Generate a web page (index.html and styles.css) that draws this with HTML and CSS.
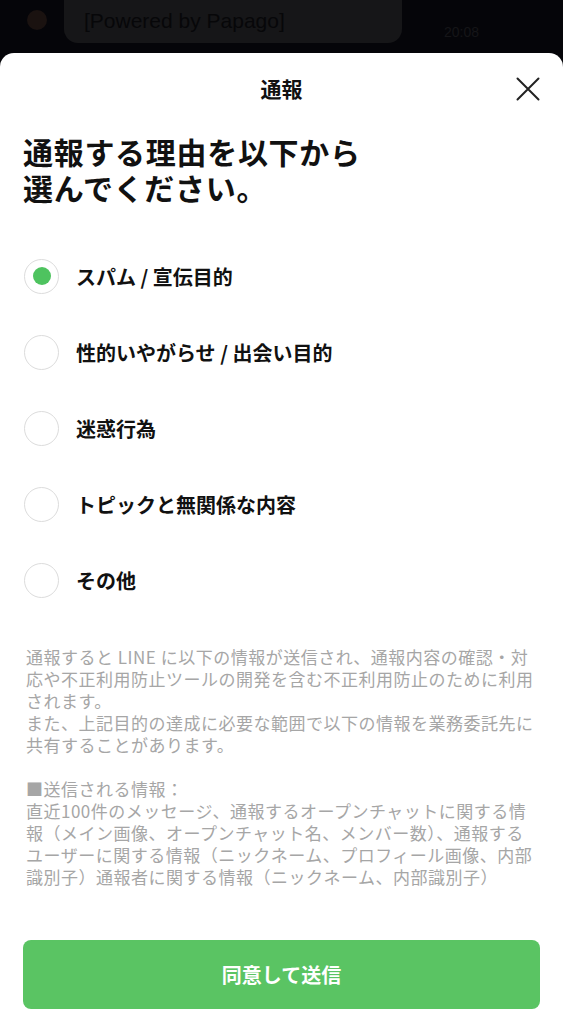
FILE: index.html
```html
<!DOCTYPE html>
<html lang="ja">
<head>
<meta charset="utf-8">
<link rel="stylesheet" href="styles.css">
</head>
<body>
<div class="backdrop">
  <div class="avatar"></div>
  <div class="bubble">[Powered by Papago]</div>
  <div class="time">20:08</div>
</div>
<div class="sheet">
  <header class="sheet-head">
    <h1 class="sheet-title">通報</h1>
    <button class="close" aria-label="閉じる">
      <svg width="24" height="24" viewBox="0 0 24 24"><path d="M1.5 1.5 L22.5 22.5 M22.5 1.5 L1.5 22.5" stroke="#222" stroke-width="2" fill="none" stroke-linecap="round"/></svg>
    </button>
  </header>
  <h2 class="question">通報する理由を以下から選んでください。</h2>
  <ul class="options">
    <li class="option selected"><span class="radio"></span><span class="label">スパム / 宣伝目的</span></li>
    <li class="option"><span class="radio"></span><span class="label">性的いやがらせ / 出会い目的</span></li>
    <li class="option"><span class="radio"></span><span class="label">迷惑行為</span></li>
    <li class="option"><span class="radio"></span><span class="label">トピックと無関係な内容</span></li>
    <li class="option"><span class="radio"></span><span class="label">その他</span></li>
  </ul>
  <p class="notice">通報すると LINE に以下の情報が送信され、通報内容の確認・対応や不正利用防止ツールの開発を含む不正利用防止のために利用されます。
また、上記目的の達成に必要な範囲で以下の情報を業務委託先に共有することがあります。

■送信される情報：
直近100件のメッセージ、通報するオープンチャットに関する情報（メイン画像、オープンチャット名、メンバー数）、通報するユーザーに関する情報（ニックネーム、プロフィール画像、内部識別子）通報者に関する情報（ニックネーム、内部識別子）</p>
  <button class="submit">同意して送信</button>
</div>
</body>
</html>
```
FILE: styles.css
```css
* { box-sizing: border-box; }
html, body { margin: 0; padding: 0; }
body {
  width: 563px;
  height: 1024px;
  overflow: hidden;
  background: #050509;
  font-family: "Noto Sans CJK JP", "Noto Sans", sans-serif;
  position: relative;
}
.backdrop {
  height: 53px;
  position: relative;
  overflow: hidden;
}
.avatar {
  position: absolute;
  left: 27px; top: 10px;
  width: 20px; height: 20px;
  border-radius: 50%;
  background: #1a1210;
}
.bubble {
  position: absolute;
  left: 64px; top: -20px;
  width: 338px; height: 63px;
  border-radius: 14px;
  background: #161618;
  color: #070709;
  font-family: "Liberation Sans", sans-serif;
  font-size: 21px;
  padding: 29px 0 0 20px;
}
.time {
  position: absolute;
  left: 444px; top: 24px;
  color: #151518;
  font-family: "Liberation Sans", sans-serif;
  font-size: 14px;
}
.sheet {
  background: #fff;
  border-radius: 14px 14px 0 0;
  height: 971px;
  padding: 0 23px;
  display: flex;
  flex-direction: column;
}
.sheet-head {
  height: 74px;
  display: flex;
  align-items: center;
  justify-content: center;
  position: relative;
}
.sheet-title {
  margin: 0 0 4px;
  font-size: 21px;
  font-weight: 700;
  color: #111;
}
.close {
  position: absolute;
  right: 0;
  top: 24px;
  width: 24px; height: 24px;
  padding: 0; border: 0; background: none;
}
.close svg { display: block; }
.question {
  margin: 6px 0 0 0;
  max-width: 350px;
  font-size: 30px;
  letter-spacing: 0.7px;
  line-height: 36px;
  font-weight: 700;
  color: #111;
}
.options {
  list-style: none;
  margin: 54px 0 0;
  padding: 0;
  display: flex;
  flex-direction: column;
  gap: 42px;
}
.option {
  display: flex;
  align-items: center;
  gap: 17px;
  height: 34px;
}
.radio {
  width: 35px; height: 35px;
  border-radius: 50%;
  border: 1px solid #dcdcdc;
  display: flex;
  align-items: center;
  justify-content: center;
  flex: none;
  margin-left: 1px;
}
.selected .radio::after {
  content: "";
  width: 18px; height: 18px;
  border-radius: 50%;
  background: #4ec35f;
}
.label {
  font-size: 20px;
  font-weight: 700;
  color: #111;
}
.notice {
  margin: 49px 0 0;
  padding-left: 3px;
  color: #a6a6a6;
  font-size: 17px;
  letter-spacing: 0.5px;
  line-height: 22px;
  white-space: pre-line;
}
.submit {
  margin-top: auto;
  margin-bottom: 15px;
  height: 69px;
  width: 100%;
  border: 0;
  border-radius: 8px;
  background: #5ac463;
  color: #fff;
  font-family: inherit;
  font-size: 20px;
  font-weight: 700;
}
```
